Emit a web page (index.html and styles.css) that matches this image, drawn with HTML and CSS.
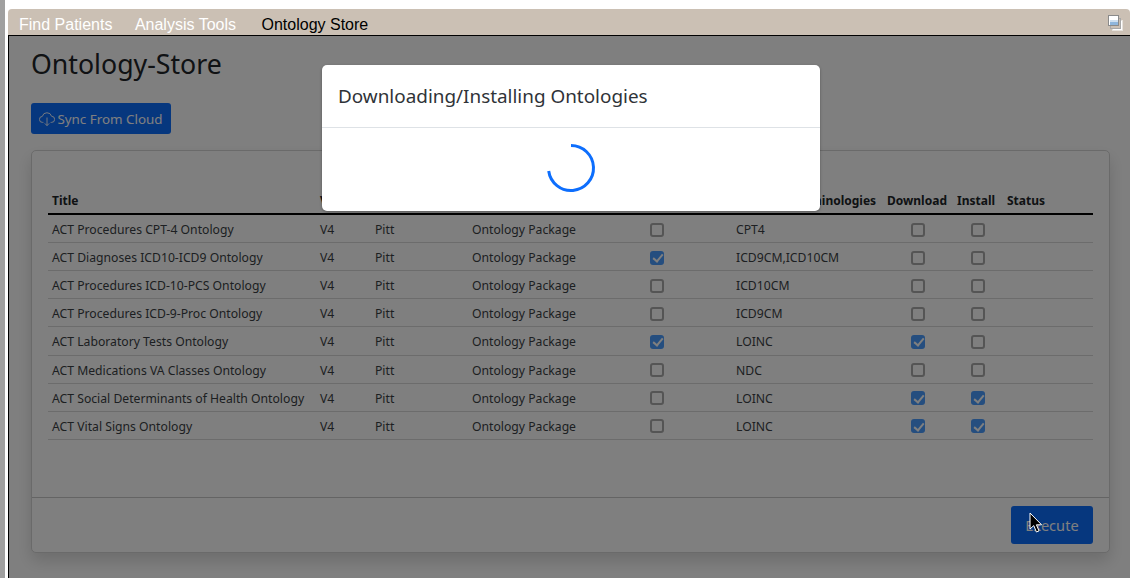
FILE: index.html
```html
<!DOCTYPE html>
<html>
<head>
  <title>Ontology Store</title>
  <meta charset="UTF-8"/>
  <link rel="stylesheet" href="styles.css">
</head>
<body>
<div class="strip"></div>
<div class="app">
  <div class="topbar">
    <a class="tab">Find Patients</a>
    <a class="tab">Analysis Tools</a>
    <a class="tab current">Ontology Store</a>
    <svg class="winicon" width="16" height="16" viewBox="0 0 16 16">
      <rect x="4.5" y="5.5" width="10" height="10" fill="#fff" stroke="#e6e2dc"/>
      <rect x="2.5" y="3.5" width="10" height="10" fill="#cbc0b4" stroke="#a8a8a8"/>
      <rect x="0.5" y="0.5" width="10" height="10" fill="#fff" stroke="#8a8a8a"/>
      <rect x="2" y="5" width="8" height="2" fill="#cfe0f0"/>
      <rect x="2" y="7" width="8" height="3" fill="#8fb6dc"/>
    </svg>
  </div>
  <div class="frame">
    <div class="page">
      <h1>Ontology-Store</h1>
      <button class="btn sync">
        <svg width="16" height="16" viewBox="0 0 16 16" fill="none" stroke="currentColor" stroke-width="0.9">
          <path d="M4.4 11.4H3.6A3 3 0 0 1 3.3 5.4 4.8 4.8 0 0 1 12.6 5.3 3 3 0 0 1 12.6 11.4H11.6"/>
          <path d="M8 6.5V14.6M5.8 12.4 8 14.6 10.2 12.4"/>
        </svg>
        Sync From Cloud
      </button>
      <div class="card">
        <div class="card-body">
          <table>
            <thead>
              <tr><th class="c-title">Title</th><th class="c-ver">Version</th><th class="c-org">Source</th><th class="c-type">Type</th><th class="c-term">Terminology</th><th class="c-names">Included Terminologies</th><th class="c-dl">Download</th><th class="c-inst">Install</th><th>Status</th></tr>
            </thead>
            <tbody>
              <tr><td>ACT Procedures CPT-4 Ontology</td><td>V4</td><td>Pitt</td><td>Ontology Package</td><td><span class="check"></span></td><td>CPT4</td><td class="dl"><span class="check"></span></td><td class="inst"><span class="check"></span></td><td></td></tr>
              <tr><td>ACT Diagnoses ICD10-ICD9 Ontology</td><td>V4</td><td>Pitt</td><td>Ontology Package</td><td><span class="check on"></span></td><td>ICD9CM,ICD10CM</td><td class="dl"><span class="check"></span></td><td class="inst"><span class="check"></span></td><td></td></tr>
              <tr><td>ACT Procedures ICD-10-PCS Ontology</td><td>V4</td><td>Pitt</td><td>Ontology Package</td><td><span class="check"></span></td><td>ICD10CM</td><td class="dl"><span class="check"></span></td><td class="inst"><span class="check"></span></td><td></td></tr>
              <tr><td>ACT Procedures ICD-9-Proc Ontology</td><td>V4</td><td>Pitt</td><td>Ontology Package</td><td><span class="check"></span></td><td>ICD9CM</td><td class="dl"><span class="check"></span></td><td class="inst"><span class="check"></span></td><td></td></tr>
              <tr><td>ACT Laboratory Tests Ontology</td><td>V4</td><td>Pitt</td><td>Ontology Package</td><td><span class="check on"></span></td><td>LOINC</td><td class="dl"><span class="check on"></span></td><td class="inst"><span class="check"></span></td><td></td></tr>
              <tr><td>ACT Medications VA Classes Ontology</td><td>V4</td><td>Pitt</td><td>Ontology Package</td><td><span class="check"></span></td><td>NDC</td><td class="dl"><span class="check"></span></td><td class="inst"><span class="check"></span></td><td></td></tr>
              <tr><td>ACT Social Determinants of Health Ontology</td><td>V4</td><td>Pitt</td><td>Ontology Package</td><td><span class="check"></span></td><td>LOINC</td><td class="dl"><span class="check on"></span></td><td class="inst"><span class="check on"></span></td><td></td></tr>
              <tr><td>ACT Vital Signs Ontology</td><td>V4</td><td>Pitt</td><td>Ontology Package</td><td><span class="check"></span></td><td>LOINC</td><td class="dl"><span class="check on"></span></td><td class="inst"><span class="check on"></span></td><td></td></tr>
            </tbody>
          </table>
        </div>
        <div class="card-foot">
          <button class="btn execute">Execute</button>
        </div>
      </div>
    </div>
    <div class="backdrop"></div>
    <div class="modal">
      <div class="modal-head">Downloading/Installing Ontologies</div>
      <div class="modal-body">
        <svg width="50" height="50" viewBox="0 0 50 50" fill="none">
          <path d="M25 2.5A22.5 22.5 0 1 1 2.7 28" stroke="#0d6efd" stroke-width="3"/>
        </svg>
      </div>
    </div>
    <svg class="pointer" width="14" height="22" viewBox="0 0 14 22">
      <path d="M1 1V17L4.8 13.6 7.4 20 10 18.9 7.4 12.8H12.6Z" fill="#000" stroke="#fff" stroke-width="1"/>
    </svg>
  </div>
</div>
</body>
</html>
```

FILE: styles.css
```css
html, body {
  margin: 0;
  height: 100%;
  overflow: hidden;
}
body {
  display: flex;
  background: #fff;
  font-family: "Noto Sans", sans-serif;
  color: #212529;
}
.strip {
  width: 5px;
  background: #a0a0a0;
}
.app {
  flex: 1;
  margin-left: 3px;
  padding-top: 9px;
  display: flex;
  flex-direction: column;
  min-width: 0;
}
.topbar {
  height: 26px;
  box-sizing: border-box;
  background: #cbc0b4;
  border-radius: 4px 4px 0 0;
  padding: 6px 0 0 11px;
  display: flex;
  align-items: center;
  font-family: "Liberation Sans", sans-serif;
  font-size: 16px;
  position: relative;
}
.tab {
  color: #fff;
  margin-right: 22.5px;
}
.tab.current {
  color: #000;
  margin-left: 3px;
}
.winicon {
  margin-left: auto;
  margin-right: 6px;
  margin-top: -4px;
}
.frame {
  flex: 1;
  position: relative;
  border-top: 1px solid #000;
  border-left: 1px solid #000;
  overflow: hidden;
}
.page {
  padding: 0 20px 0 22px;
}
h1 {
  margin: 0;
  padding-top: 8px;
  font-size: 26.7px;
  line-height: 40px;
  font-weight: 400;
}
.btn {
  font-family: inherit;
  background: #0d6efd;
  color: #fff;
  border: 0;
  border-radius: 3px;
}
.sync {
  margin-top: 19px;
  width: 140px;
  height: 31px;
  font-size: 13.4px;
  padding: 0;
  display: flex;
  align-items: center;
  justify-content: center;
  gap: 2px;
}
.card {
  margin-top: 16px;
  height: 403px;
  box-sizing: border-box;
  background: #fff;
  border: 1px solid #d5d5d5;
  border-radius: 5px;
  box-shadow: 0 8px 16px rgba(0, 0, 0, .15);
  display: flex;
  flex-direction: column;
}
.card-body {
  flex: 1;
  padding: 38px 16px 0;
}
table {
  width: 1045px;
  table-layout: fixed;
  border-collapse: collapse;
  font-size: 12.2px;
}
th {
  text-align: left;
  font-size: 12px;
  font-weight: 700;
  padding: 0 4px 2px;
  height: 25.4px;
  box-sizing: border-box;
  white-space: nowrap;
  overflow: hidden;
  border-bottom: 2px solid #000;
}
td {
  padding: 2px 4px 0;
  box-sizing: border-box;
  height: 28.14px;
  border-bottom: 1px solid #d8d8d8;
  color: #3a3f44;
  white-space: nowrap;
}
td.dl {
  padding-left: 28px;
}
td.inst {
  padding-left: 18px;
}
th.c-names {
  text-align: right;
  padding-right: 9px;
}
.c-title { width: 268px; }
.c-ver { width: 55px; }
.c-org { width: 97px; }
.c-type { width: 178px; }
.c-term { width: 86px; }
.c-names { width: 151px; }
.c-dl { width: 70px; }
.c-inst { width: 50px; }
.check {
  display: block;
  width: 14px;
  height: 14px;
  box-sizing: border-box;
  border: 2px solid #aaa;
  border-radius: 3px;
  background: #fff;
}
.check.on {
  border: 0;
  background: #4a9cff;
  position: relative;
}
.check.on::after {
  content: "";
  position: absolute;
  left: 4.5px;
  top: 1.5px;
  width: 4px;
  height: 8px;
  border: solid #fff;
  border-width: 0 2px 2px 0;
  transform: rotate(40deg);
}
.card-foot {
  height: 55px;
  box-sizing: border-box;
  border-top: 1px solid #c8c8c8;
  display: flex;
  justify-content: flex-end;
  align-items: center;
  padding-right: 16px;
}
.execute {
  width: 82px;
  height: 38px;
  font-size: 14.6px;
}
.backdrop {
  position: absolute;
  inset: 0;
  background: rgba(0, 0, 0, .5);
}
.modal {
  position: absolute;
  left: 313px;
  top: 29px;
  width: 498px;
  height: 146px;
  background: #fff;
  border-radius: 5px;
  box-shadow: 0 1px 3px rgba(0, 0, 0, .3);
}
.modal-head {
  height: 63px;
  box-sizing: border-box;
  border-bottom: 1px solid #dee2e6;
  padding-left: 16px;
  font-size: 18.9px;
  line-height: 63px;
  color: #2f3338;
}
.modal-body {
  display: flex;
  justify-content: center;
  padding-top: 15px;
}
.pointer {
  position: absolute;
  left: 1020px;
  top: 476px;
}
```
